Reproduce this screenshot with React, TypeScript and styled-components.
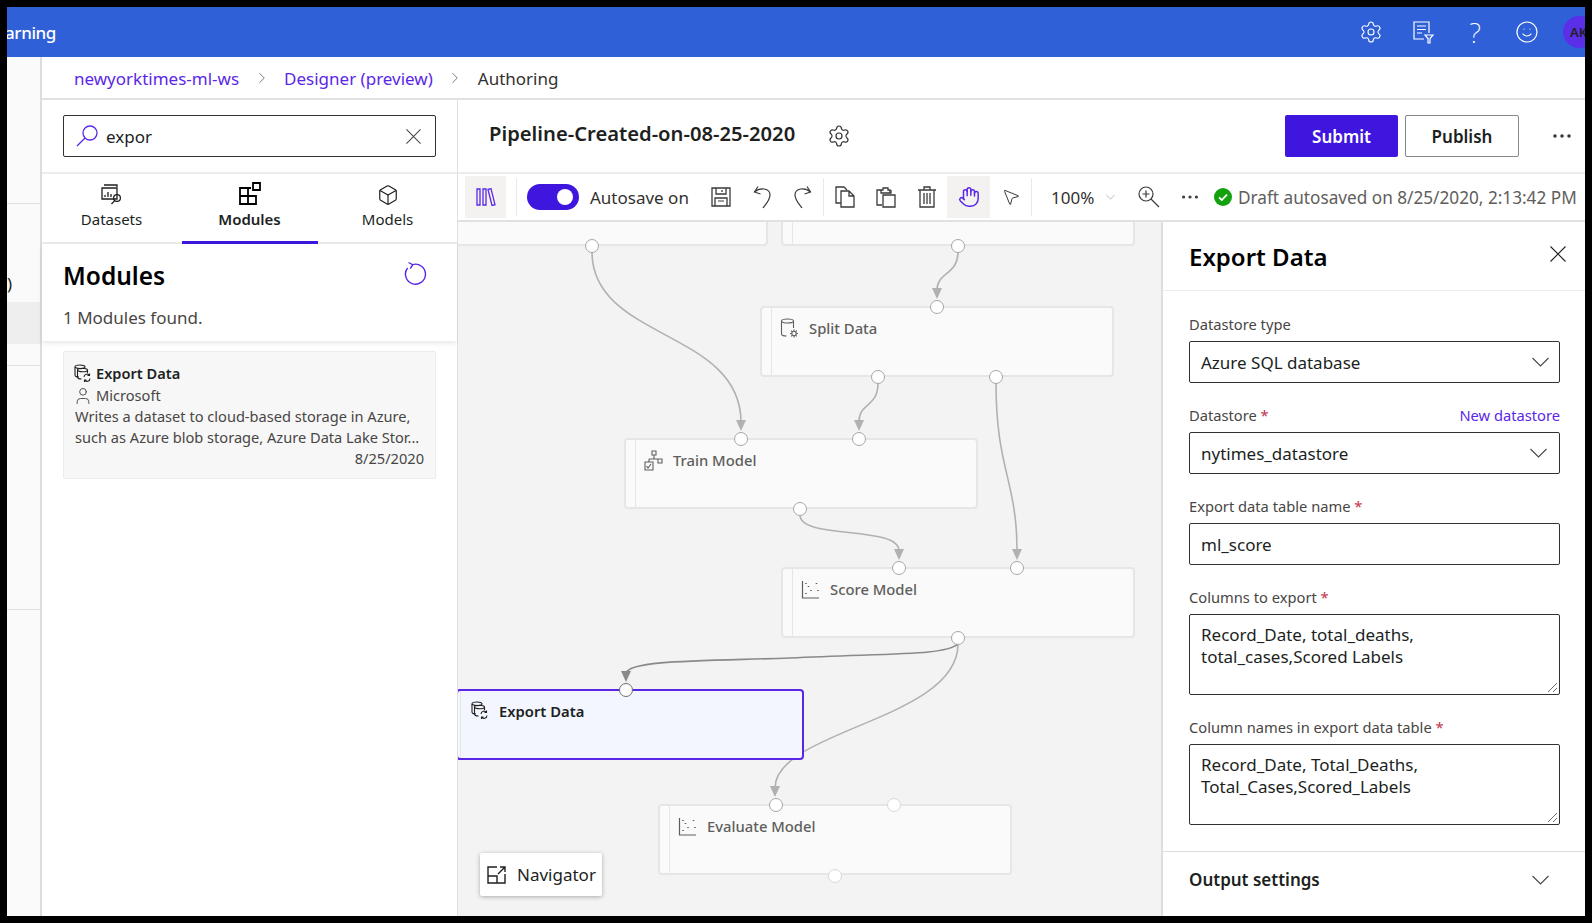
import { ReactNode } from "react";
import styled, { createGlobalStyle } from "styled-components";
import { ChevronRight, Hand, MoreHorizontal, Settings, Smile, Box, User, MousePointer2 } from "lucide-react";

const UI_FONT = `"Noto Sans", "Open Sans", Arial, sans-serif`;
const ACCENT = "#3f16de";
const LINK = "#5a27e8";

const GlobalStyle = createGlobalStyle`
  html, body {
    margin: 0;
    height: 100%;
    background: #000;
    font-family: ${UI_FONT};
    overflow: hidden;
  }
  #root { height: 100%; }
  * { box-sizing: border-box; }
`;

// small drawings that lucide has no match for

const ListFilterIcon = () => (
  <svg width="24" height="24" viewBox="0 0 24 24" fill="none" stroke="currentColor" strokeWidth="1.2">
    <path d="M13 19H3V2h15v11" />
    <path d="M6 6h9M6 9.5h9M6 13h5" />
    <path d="M14 15h8l-3 3.5V23h-2v-4.5z" />
  </svg>
);

const SearchGlyph = () => (
  <svg width="22" height="22" viewBox="0 0 22 22" fill="none" stroke={LINK} strokeWidth="1.3">
    <circle cx="14" cy="8" r="7" />
    <path d="M9 13 1 21" />
  </svg>
);

const CloseIcon = ({ size, color }: { size: number; color: string }) => (
  <svg width={size} height={size} viewBox="0 0 16 16" fill="none" stroke={color} strokeWidth="1.1">
    <path d="M.5.5l15 15M15.5.5l-15 15" />
  </svg>
);

const Chevron = ({ color = "#484644" }: { color?: string }) => (
  <svg width="17" height="10" viewBox="0 0 17 10" fill="none" stroke={color} strokeWidth="1.1">
    <path d="M.5 1l8 8 8-8" />
  </svg>
);

const RefreshIcon = () => (
  <svg width="24" height="24" viewBox="0 0 24 24" fill="none" stroke={LINK} strokeWidth="1.4">
    <path d="M8.6 3.6A10 10 0 1 1 3.6 7" />
    <path d="M4.5 1.5l4.2 2.2-2.4 4" />
  </svg>
);

const DatasetIcon = () => (
  <svg width="24" height="24" viewBox="0 0 24 24" fill="none" stroke="#201f1e" strokeWidth="1.3">
    <path d="M4 3h13v2M2 6h15v11H2z" />
    <path d="M5 13v2M8 10v5M11 12v3" />
    <circle cx="17" cy="16" r="3.4" />
    <path d="M14.8 18.6 11.5 22" />
  </svg>
);

const ModulesIcon = () => (
  <svg width="24" height="24" viewBox="0 0 24 24" fill="none" stroke="#000" strokeWidth="1.8">
    <path d="M2 6h8v8H2zM10 14h8v8h-8zM2 14h8v8H2zM10 6h3" />
    <path d="M15 1h7v7h-7z" />
  </svg>
);

const ExportDataIcon = () => (
  <svg width="19" height="19" viewBox="0 0 19 19" fill="none" stroke="currentColor" strokeWidth="1.1">
    <ellipse cx="7" cy="2.8" rx="5" ry="1.8" />
    <path d="M2 3v8c0 1 1 2 4 2" />
    <ellipse cx="9.5" cy="6" rx="5" ry="1.8" />
    <path d="M4.5 6v7c0 1 1.5 2 4 2M14.5 6v3" />
    <path d="M11 13a3 3 0 0 1 5.5-1.5M17 14.5a3 3 0 0 1-5.5 1.5M16.5 9.5v2h-2M11.5 18v-2h2" />
  </svg>
);

const SplitDataIcon = () => (
  <svg width="19" height="21" viewBox="0 0 19 21" fill="none" stroke="currentColor" strokeWidth="1.1">
    <ellipse cx="7.5" cy="3" rx="6" ry="2" />
    <path d="M1.5 3v13c0 1.2 2 2 5 2M13.5 3v7" />
    <circle cx="14" cy="15.5" r="2.2" />
    <path d="M14 11.5v1.5M14 18v1.5M10 15.5h1.5M16.5 15.5H18M11.2 12.7l1 1M15.8 17.3l1 1M11.2 18.3l1-1M15.8 13.7l1-1" />
  </svg>
);

const TrainModelIcon = () => (
  <svg width="19" height="21" viewBox="0 0 19 21" fill="none" stroke="currentColor" strokeWidth="1.1">
    <path d="M8 1h4v4H8zM10 5v4M5 9h10M14 9h4v4h-4zM5 9v3" />
    <path d="M1 12h8v8H1zM2.5 16l1.5 2 3-4" />
  </svg>
);

const ScatterIcon = () => (
  <svg width="19" height="21" viewBox="0 0 19 21" fill="none" stroke="currentColor" strokeWidth="1.2">
    <path d="M1.5 2v17H18" />
    <path d="M5 14v1M7.5 7v1M10 11v1M15.5 4v1M17 11v1M5 4v1" strokeWidth="1.6" />
  </svg>
);

const NavigatorIcon = () => (
  <svg width="20" height="18" viewBox="0 0 20 18" fill="none" stroke="#201f1e" strokeWidth="1.4">
    <path d="M10 1H1v16h17V8M1 10h9v7" />
    <path d="M11 8l7-7M13 1h5v5" />
  </svg>
);

const LibraryIcon = () => (
  <svg width="20" height="18" viewBox="0 0 20 18" fill="none" stroke={LINK} strokeWidth="1.3">
    <path d="M1 1h3v16H1zM7 1h3v16H7zM12 1.5l3-.8 4 16-3 .8z" />
  </svg>
);

const SaveIcon = () => (
  <svg width="20" height="20" viewBox="0 0 20 20" fill="none" stroke="#3b3a39" strokeWidth="1.3">
    <path d="M1 1h18v18H1z" />
    <path d="M5 1v6h10V1M4 19v-8h12v8M11 3v2" />
    <path d="M7 14h6" strokeWidth="1" />
  </svg>
);

const UndoIcon = ({ flip }: { flip?: boolean }) => (
  <svg width="18" height="24" viewBox="0 0 18 24" fill="none" stroke="#3b3a39" strokeWidth="1.2" transform={flip ? "scale(-1 1)" : undefined}>
    <path d="M1.5 7C7 2 17 3 17 10c0 5-4 9-7 13" />
    <path d="M5 1.5 1.5 7l6 2" />
  </svg>
);

const CopyIcon = () => (
  <svg width="20" height="22" viewBox="0 0 20 22" fill="none" stroke="#3b3a39" strokeWidth="1.3">
    <path d="M6 17H1V1h8l3 3" />
    <path d="M6 5h8l5 5v11H6zM14 5v5h5" />
  </svg>
);

const PasteIcon = () => (
  <svg width="20" height="22" viewBox="0 0 20 22" fill="none" stroke="#3b3a39" strokeWidth="1.3">
    <path d="M6 4H1v15h5" />
    <path d="M6 4h1V2h5v2h2v3" />
    <path d="M5 4v3h10V4" />
    <path d="M7 9h12v12H7z" />
  </svg>
);

const TrashIcon = () => (
  <svg width="18" height="22" viewBox="0 0 18 22" fill="none" stroke="#3b3a39" strokeWidth="1.3">
    <path d="M0 4h18M6 4V1h6v3" />
    <path d="M2 4v17h14V4" />
    <path d="M6 7v11M9 7v11M12 7v11" />
  </svg>
);

const ZoomGlyph = () => (
  <svg width="22" height="22" viewBox="0 0 22 22" fill="none" stroke="#3b3a39" strokeWidth="1.2">
    <circle cx="8" cy="8" r="7" />
    <path d="M13 13l8 8M8 4.5v7M4.5 8h7" />
  </svg>
);

const CircleCheck = () => (
  <svg width="18" height="18" viewBox="0 0 18 18">
    <circle cx="9" cy="9" r="9" fill="#13a10e" />
    <path d="M5 9.3l2.8 2.7L13 6.6" fill="none" stroke="#fff" strokeWidth="1.8" />
  </svg>
);

const ResizeGrip = () => (
  <GripSvg width="11" height="11" viewBox="0 0 11 11" stroke="#5f5f5f" strokeWidth="0.9">
    <path d="M1 10 10 1M6 10l4-4" />
  </GripSvg>
);

// canvas data, coordinates are page pixels and get shifted by the canvas origin

const CANVAS_X = 458;
const CANVAS_Y = 222;

const nodes = [
  { id: "a", x: 414, y: 175, title: "", Icon: null },
  { id: "b", x: 781, y: 175, title: "", Icon: null },
  { id: "split", x: 760, y: 306, title: "Split Data", Icon: SplitDataIcon },
  { id: "train", x: 624, y: 438, title: "Train Model", Icon: TrainModelIcon },
  { id: "score", x: 781, y: 567, title: "Score Model", Icon: ScatterIcon },
  { id: "evaluate", x: 658, y: 804, title: "Evaluate Model", Icon: ScatterIcon },
];

const ports: [number, number, boolean?][] = [
  [592, 246],
  [958, 246],
  [937, 307],
  [878, 377],
  [996, 377],
  [741, 439],
  [859, 439],
  [800, 509],
  [899, 568],
  [1017, 568],
  [958, 638],
  [776, 805],
  [894, 805, true],
  [835, 876, true],
];

const edges = [
  { d: "M592 252 C592 340 741 330 741 422", tip: [741, 431] },
  { d: "M958 252 C958 275 937 272 937 290", tip: [937, 299] },
  { d: "M878 383 C878 408 859 402 859 422", tip: [859, 431] },
  { d: "M996 383 C996 470 1017 480 1017 551", tip: [1017, 560] },
  { d: "M800 515 C800 540 899 525 899 551", tip: [899, 560] },
  { d: "M958 644 C958 720 775 730 775 788", tip: [775, 797] },
  { d: "M958 644 C945 655 900 653 790 658 C700 661 630 660 626 673", tip: [626, 682], dark: true },
];

const Edges = () => (
  <EdgeLayer viewBox={`${CANVAS_X} ${CANVAS_Y} 704 694`} width="704" height="694">
    {edges.map((e) => {
      const color = e.dark ? "#8a8a8a" : "#b1b1b1";
      const [x, y] = e.tip;
      return (
        <g key={e.d}>
          <path d={e.d} fill="none" stroke={color} strokeWidth="1.6" />
          <polygon points={`${x - 5},${y - 11} ${x + 5},${y - 11} ${x},${y}`} fill={color} />
        </g>
      );
    })}
  </EdgeLayer>
);

const Field = ({ label, required, action, children }: { label: string; required?: boolean; action?: string; children: ReactNode }) => (
  <FieldWrap>
    <FieldLabelRow>
      <FieldLabel>
        {label}
        {required && <Required> *</Required>}
      </FieldLabel>
      {action && <ActionLink>{action}</ActionLink>}
    </FieldLabelRow>
    {children}
  </FieldWrap>
);

const App = () => {
  return (
    <>
      <GlobalStyle />
      <Frame>
        <TopBar>
          <AppName>
            <span>Learning</span>
          </AppName>
          <TopIcons>
            <Settings size={24} strokeWidth={1.1} />
            <ListFilterIcon />
            <HelpGlyph>?</HelpGlyph>
            <Smile size={24} strokeWidth={1.2} />
            <Avatar>AK</Avatar>
          </TopIcons>
        </TopBar>
        <Body>
          <Rail>
            <RailParen>)</RailParen>
            <RailActive />
            <RailRule />
          </Rail>
          <Main>
            <Breadcrumbs>
              <Crumb>newyorktimes-ml-ws</Crumb>
              <ChevronRight size={18} strokeWidth={1.1} color="#605e5c" />
              <Crumb>Designer (preview)</Crumb>
              <ChevronRight size={18} strokeWidth={1.1} color="#605e5c" />
              <CrumbCurrent>Authoring</CrumbCurrent>
            </Breadcrumbs>
            <Workspace>
              <Palette>
                <SearchRow>
                  <SearchBox>
                    <SearchGlyph />
                    <SearchText>expor</SearchText>
                    <CloseIcon size={15} color="#484644" />
                  </SearchBox>
                </SearchRow>
                <Tabs>
                  <Tab>
                    <DatasetIcon />
                    <span>Datasets</span>
                  </Tab>
                  <Tab $active>
                    <ModulesIcon />
                    <span>Modules</span>
                  </Tab>
                  <Tab>
                    <Box size={22} strokeWidth={1.3} color="#201f1e" />
                    <span>Models</span>
                  </Tab>
                </Tabs>
                <ResultsHeader>
                  <ResultsTitleRow>
                    <ResultsTitle>Modules</ResultsTitle>
                    <RefreshIcon />
                  </ResultsTitleRow>
                  <ResultsCount>1 Modules found.</ResultsCount>
                </ResultsHeader>
                <ModuleCard>
                  <CardTitle>
                    <ExportDataIcon />
                    Export Data
                  </CardTitle>
                  <CardAuthor>
                    <User size={20} strokeWidth={1.1} />
                    Microsoft
                  </CardAuthor>
                  <CardText>Writes a dataset to cloud-based storage in Azure,</CardText>
                  <CardText>such as Azure blob storage, Azure Data Lake Stor...</CardText>
                  <CardDate>8/25/2020</CardDate>
                </ModuleCard>
              </Palette>
              <Editor>
                <TitleBar>
                  <PipelineName>Pipeline-Created-on-08-25-2020</PipelineName>
                  <Settings size={24} strokeWidth={1.2} color="#323130" />
                  <TitleActions>
                    <SubmitButton>Submit</SubmitButton>
                    <PublishButton>Publish</PublishButton>
                    <MoreHorizontal size={24} strokeWidth={1.5} color="#323130" />
                  </TitleActions>
                </TitleBar>
                <Toolbar>
                  <ToolButton $active $width={41}>
                    <LibraryIcon />
                  </ToolButton>
                  <ToolDivider />
                  <Toggle>
                    <ToggleKnob />
                  </Toggle>
                  <AutosaveLabel>Autosave on</AutosaveLabel>
                  <ToolButton $width={41}>
                    <SaveIcon />
                  </ToolButton>
                  <ToolButton $width={41}>
                    <UndoIcon />
                  </ToolButton>
                  <ToolButton $width={41}>
                    <UndoIcon flip />
                  </ToolButton>
                  <ToolDivider $tight />
                  <ToolButton $width={41}>
                    <CopyIcon />
                  </ToolButton>
                  <ToolButton $width={41}>
                    <PasteIcon />
                  </ToolButton>
                  <ToolButton $width={41}>
                    <TrashIcon />
                  </ToolButton>
                  <ToolButton $active $width={43}>
                    <Hand size={22} strokeWidth={1.6} color={LINK} />
                  </ToolButton>
                  <ToolButton $width={41}>
                    <MousePointer2 size={20} strokeWidth={1.2} />
                  </ToolButton>
                  <ToolDivider $tight />
                  <ZoomLevel>
                    100%
                    <Chevron color="#8a8886" />
                  </ZoomLevel>
                  <ToolButton $width={41}>
                    <ZoomGlyph />
                  </ToolButton>
                  <ToolButton $width={41}>
                    <MoreHorizontal size={22} strokeWidth={1.5} />
                  </ToolButton>
                  <StatusIcon>
                    <CircleCheck />
                  </StatusIcon>
                  <DraftStatus>Draft autosaved on 8/25/2020, 2:13:42 PM</DraftStatus>
                </Toolbar>
                <EditorBody>
                  <Canvas>
                    <Edges />
                    {nodes.map(({ id, x, y, title, Icon }) => (
                      <Node key={id} style={{ left: x - CANVAS_X, top: y - CANVAS_Y }}>
                        {Icon && <Icon />}
                        {title && <NodeTitle>{title}</NodeTitle>}
                      </Node>
                    ))}
                    <SelectedNode>
                      <ExportDataIcon />
                      <NodeTitle $selected>Export Data</NodeTitle>
                    </SelectedNode>
                    {ports.map(([x, y, faint]) => (
                      <Port key={`${x}-${y}`} $faint={faint} style={{ left: x - CANVAS_X - 7, top: y - CANVAS_Y - 7 }} />
                    ))}
                    <SelectedPort />
                    <NavigatorButton>
                      <NavigatorIcon />
                      Navigator
                    </NavigatorButton>
                  </Canvas>
                  <Properties>
                    <PropertiesHeader>
                      <PropertiesTitle>Export Data</PropertiesTitle>
                      <CloseIcon size={16} color="#201f1e" />
                    </PropertiesHeader>
                    <PropertiesForm>
                      <Field label="Datastore type">
                        <Control>
                          Azure SQL database
                          <Chevron />
                        </Control>
                      </Field>
                      <Field label="Datastore" required action="New datastore">
                        <Control $inset={12}>
                          nytimes_datastore
                          <Chevron />
                        </Control>
                      </Field>
                      <Field label="Export data table name" required>
                        <Control>ml_score</Control>
                      </Field>
                      <Field label="Columns to export" required>
                        <MultilineControl>
                          Record_Date, total_deaths,
                          <br />
                          total_cases,Scored Labels
                          <ResizeGrip />
                        </MultilineControl>
                      </Field>
                      <Field label="Column names in export data table" required>
                        <MultilineControl>
                          Record_Date, Total_Deaths,
                          <br />
                          Total_Cases,Scored_Labels
                          <ResizeGrip />
                        </MultilineControl>
                      </Field>
                    </PropertiesForm>
                    <OutputSettings>
                      Output settings
                      <Chevron />
                    </OutputSettings>
                  </Properties>
                </EditorBody>
              </Editor>
            </Workspace>
          </Main>
        </Body>
      </Frame>
    </>
  );
};

const Frame = styled.div`
  position: relative;
  display: flex;
  flex-direction: column;
  width: 1578px;
  height: 909px;
  margin: 7px 0 0 7px;
  background: #fff;
  overflow: hidden;
`;

const TopBar = styled.header`
  flex: none;
  display: flex;
  align-items: center;
  justify-content: space-between;
  height: 50px;
  background: #2f60d8;
  color: #fff;
`;

const AppName = styled.div`
  display: flex;
  justify-content: flex-end;
  width: 49px;
  overflow: hidden;
  font-size: 17px;
  letter-spacing: -0.4px;
  font-weight: 500;
  white-space: nowrap;
`;

const TopIcons = styled.div`
  display: flex;
  align-items: center;
  gap: 28px;
  margin-right: -10px;
`;

const HelpGlyph = styled.span`
  width: 24px;
  font-size: 28px;
  line-height: 32px;
  font-weight: 200;
  text-align: center;
`;

const Avatar = styled.div`
  display: flex;
  align-items: center;
  padding-left: 7px;
  width: 32px;
  height: 32px;
  margin-left: -4px;
  border-radius: 50%;
  background: #5b2ee8;
  color: #201f1e;
  font-size: 13px;
  font-weight: 600;
`;

const Body = styled.div`
  flex: 1;
  display: flex;
  min-height: 0;
`;

const Rail = styled.nav`
  flex: none;
  width: 35px;
  padding-top: 146px;
  border-right: 2px solid #dddddd;
  background: #fafafa;
`;

const RailParen = styled.div`
  height: 99px;
  padding-top: 68px;
  border-top: 1px solid #e1e1e1;
  font-size: 17px;
  color: #201f1e;
  line-height: 24px;
`;

const RailActive = styled.div`
  height: 42px;
  background: #eeeeee;
`;

const RailRule = styled.div`
  height: 245px;
  margin-top: 21px;
  border-top: 1px solid #e1e1e1;
  border-bottom: 1px solid #e1e1e1;
`;

const Main = styled.main`
  flex: 1;
  display: flex;
  flex-direction: column;
  min-width: 0;
`;

const Breadcrumbs = styled.div`
  flex: none;
  display: flex;
  align-items: center;
  gap: 13.5px;
  height: 43px;
  padding: 1px 0 0 32px;
  border-bottom: 2px solid #e1e1e1;
  font-size: 17px;
`;

const Crumb = styled.span`
  color: ${LINK};
`;

const CrumbCurrent = styled.span`
  color: #323130;
`;

const Workspace = styled.div`
  flex: 1;
  display: flex;
  min-height: 0;
`;

const Palette = styled.aside`
  flex: none;
  display: flex;
  flex-direction: column;
  width: 416px;
  border-right: 1px solid #e1e1e1;
`;

const SearchRow = styled.div`
  flex: none;
  height: 74px;
  padding: 15px 21px 0;
  border-bottom: 2px solid #ececec;
`;

const SearchBox = styled.div`
  display: flex;
  align-items: center;
  gap: 8px;
  height: 42px;
  padding: 0 14px 0 12px;
  border: 1px solid #323130;
  border-radius: 2px;
`;

const SearchText = styled.span`
  flex: 1;
  font-size: 17px;
  color: #201f1e;
`;

const Tabs = styled.div`
  flex: none;
  display: grid;
  grid-template-columns: repeat(3, 136px);
  justify-content: center;
  column-gap: 2px;
  height: 70px;
  border-bottom: 2px solid #ececec;
`;

const Tab = styled.div<{ $active?: boolean }>`
  display: flex;
  flex-direction: column;
  align-items: center;
  justify-content: flex-end;
  gap: 3px;
  height: 70px;
  padding-bottom: 12px;
  border-bottom: 3px solid ${({ $active }) => ($active ? ACCENT : "transparent")};
  color: #201f1e;
  font-size: 15px;
  font-weight: ${({ $active }) => ($active ? 600 : 400)};
`;

const ResultsHeader = styled.div`
  flex: none;
  height: 97px;
  padding: 14px 21px 0;
  box-shadow: 0 2px 5px rgba(0, 0, 0, 0.1);
`;

const ResultsTitleRow = styled.div`
  display: flex;
  align-items: center;
  justify-content: space-between;
  padding-right: 8px;

  svg {
    margin-bottom: 7px;
  }
`;

const ResultsTitle = styled.h2`
  margin: 0;
  font-size: 24.5px;
  line-height: 36px;
  font-weight: 600;
  color: #000;
`;

const ResultsCount = styled.div`
  margin-top: 12px;
  font-size: 17px;
  color: #484644;
`;

const ModuleCard = styled.article`
  flex: none;
  height: 128px;
  margin: 10px 21px 0;
  padding: 11px 11px 0;
  border: 1px solid #ececec;
  border-radius: 2px;
  background: #f7f7f7;
  color: #484644;
  font-size: 14.6px;
  line-height: 21px;
`;

const CardTitle = styled.div`
  display: flex;
  align-items: center;
  gap: 4px;
  margin: 0 0 1px -2px;
  font-weight: 600;
  color: #201f1e;
`;

const CardAuthor = styled.div`
  display: flex;
  align-items: center;
  gap: 3px;
  margin-left: -2px;
`;

const CardText = styled.div`
  white-space: nowrap;
`;

const CardDate = styled.div`
  text-align: right;
`;

const Editor = styled.section`
  flex: 1;
  display: flex;
  flex-direction: column;
  min-width: 0;
`;

const TitleBar = styled.div`
  flex: none;
  display: flex;
  align-items: center;
  gap: 32px;
  height: 74px;
  padding: 0 11px 0 31px;
  border-bottom: 2px solid #ececec;
`;

const PipelineName = styled.h1`
  margin: 0 0 7px;
  font-size: 20.2px;
  font-weight: 600;
  color: #201f1e;
`;

const TitleActions = styled.div`
  display: flex;
  align-items: center;
  margin-left: auto;
  gap: 7px;

  svg {
    margin-left: 24px;
  }
`;

const SubmitButton = styled.button`
  width: 113px;
  height: 42px;
  border: none;
  border-radius: 2px;
  background: ${ACCENT};
  color: #fff;
  font: 600 17px ${UI_FONT};
`;

const PublishButton = styled.button`
  width: 114px;
  height: 42px;
  border: 1px solid #8a8886;
  border-radius: 2px;
  background: #fff;
  color: #201f1e;
  font: 600 17px ${UI_FONT};
`;

const Toolbar = styled.div`
  flex: none;
  display: flex;
  align-items: center;
  height: 48px;
  padding-left: 7px;
  border-bottom: 2px solid #e1e1e1;
  color: #3b3a39;
`;

const ToolButton = styled.div<{ $active?: boolean; $width: number }>`
  flex: none;
  display: flex;
  align-items: center;
  justify-content: center;
  width: ${({ $width }) => $width}px;
  height: 42px;
  background: ${({ $active }) => ($active ? "#f3f2f1" : "transparent")};
`;

const ToolDivider = styled.div<{ $tight?: boolean }>`
  flex: none;
  width: 1px;
  height: 38px;
  margin: ${({ $tight }) => ($tight ? "0" : "0 10px")};
  background: #e9e9e9;
`;

const Toggle = styled.div`
  flex: none;
  display: flex;
  align-items: center;
  justify-content: flex-end;
  width: 52px;
  height: 26px;
  padding-right: 6px;
  border-radius: 13px;
  background: ${ACCENT};
`;

const ToggleKnob = styled.div`
  width: 16px;
  height: 16px;
  border-radius: 50%;
  background: #fff;
`;

const AutosaveLabel = styled.span`
  flex: none;
  width: 110px;
  margin-left: 11px;
  font-size: 17px;
  color: #323130;
  white-space: nowrap;
`;

const ZoomLevel = styled.div`
  flex: none;
  display: flex;
  align-items: center;
  gap: 12px;
  width: 77px;
  margin-left: 19px;
  font-size: 17px;
  color: #323130;

  svg {
    width: 9px;
  }
`;

const StatusIcon = styled.span`
  display: flex;
  margin-left: 4px;
`;

const DraftStatus = styled.span`
  margin-left: 6px;
  font-size: 17.2px;
  color: #605e5c;
  white-space: nowrap;
`;

const EditorBody = styled.div`
  flex: 1;
  display: flex;
  min-height: 0;
`;

const Canvas = styled.div`
  position: relative;
  flex: 1;
  min-width: 0;
  background: #f3f3f3;
  overflow: hidden;
`;

const EdgeLayer = styled.svg`
  position: absolute;
  left: 0;
  top: 0;
`;

const Node = styled.div`
  position: absolute;
  display: flex;
  align-items: flex-start;
  gap: 10px;
  width: 354px;
  height: 71px;
  padding: 10px 0 0 18px;
  border: 2px solid #e6e6e6;
  border-radius: 4px;
  background: #fafafa;
  color: #605e5c;

  &::before {
    content: "";
    position: absolute;
    left: 9px;
    top: 0;
    bottom: 0;
    width: 1px;
    background: #e6e6e6;
  }
`;

const SelectedNode = styled(Node)`
  left: -2px;
  top: 467px;
  width: 348px;
  border-color: ${LINK};
  background: #f3f6fe;
  color: #201f1e;
  padding-left: 12px;

  &::before {
    left: 2px;
  }
`;

const NodeTitle = styled.span<{ $selected?: boolean }>`
  font-size: 14.8px;
  line-height: 20px;
  font-weight: ${({ $selected }) => ($selected ? 600 : 500)};
`;

const Port = styled.div<{ $faint?: boolean }>`
  position: absolute;
  width: 14px;
  height: 14px;
  border: 1px solid ${({ $faint }) => ($faint ? "#d8d8d8" : "#a6a6a6")};
  border-radius: 50%;
  background: #fff;
`;

const SelectedPort = styled(Port)`
  left: 161px;
  top: 461px;
  border-color: #6e6e6e;
`;

const NavigatorButton = styled.div`
  position: absolute;
  left: 22px;
  top: 631px;
  display: flex;
  align-items: center;
  gap: 10px;
  width: 122px;
  height: 43px;
  padding-left: 7px;
  border-radius: 2px;
  background: #fff;
  box-shadow: 0 1px 4px rgba(0, 0, 0, 0.3);
  color: #201f1e;
  font-size: 17px;
`;

const Properties = styled.aside`
  flex: none;
  display: flex;
  flex-direction: column;
  width: 424px;
  border-left: 2px solid #dedede;
  background: #fff;
`;

const PropertiesHeader = styled.div`
  flex: none;
  display: flex;
  align-items: center;
  justify-content: space-between;
  height: 69px;
  padding: 0 19px 4px 26px;
  border-bottom: 1px solid #ececec;
`;

const PropertiesTitle = styled.h2`
  margin: 4px 0 0;
  font-size: 24px;
  font-weight: 600;
  color: #000;
`;

const PropertiesForm = styled.div`
  flex: none;
  display: flex;
  flex-direction: column;
  gap: 22px;
  height: 561px;
  padding: 23px 25px 0 26px;
  border-bottom: 1px solid #dcdcdc;
`;

const FieldWrap = styled.div`
  display: flex;
  flex-direction: column;
  gap: 6px;
`;

const FieldLabelRow = styled.div`
  display: flex;
  align-items: baseline;
  justify-content: space-between;
  height: 21px;
`;

const FieldLabel = styled.label`
  font-size: 14.7px;
  line-height: 21px;
  color: #484644;
`;

const Required = styled.span`
  color: #c4314b;
`;

const ActionLink = styled.span`
  margin-top: -1px;
  font-size: 14.7px;
  color: ${LINK};
`;

const Control = styled.div<{ $inset?: number }>`
  display: flex;
  align-items: center;
  justify-content: space-between;
  height: 42px;
  padding: 0 ${({ $inset }) => $inset ?? 10}px 0 11px;
  border: 1px solid #323130;
  border-radius: 2px;
  font-size: 17px;
  color: #201f1e;
`;

const MultilineControl = styled.div`
  position: relative;
  height: 81px;
  padding: 9px 11px;
  border: 1px solid #323130;
  border-radius: 2px;
  font-size: 17px;
  line-height: 22px;
  color: #201f1e;
`;

const GripSvg = styled.svg`
  position: absolute;
  right: 1px;
  bottom: 1px;
`;

const OutputSettings = styled.div`
  flex: 1;
  display: flex;
  align-items: center;
  justify-content: space-between;
  padding: 0 36px 9px 26px;
  font-size: 17px;
  font-weight: 600;
  color: #201f1e;
`;

export default App;
